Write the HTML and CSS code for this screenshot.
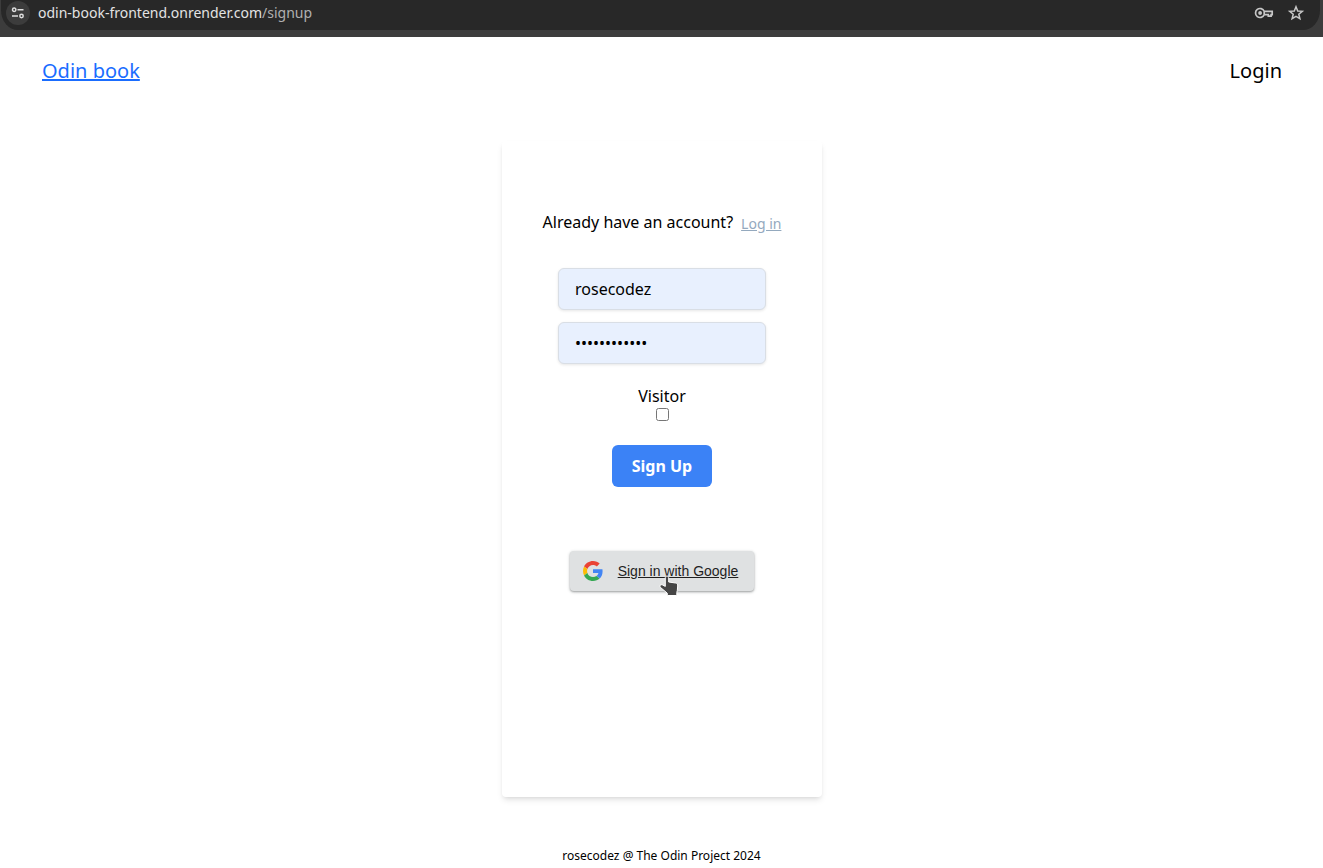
FILE: index.html
```html
<!DOCTYPE html>
<html lang="en">
<head>
<meta charset="utf-8">
<meta name="viewport" content="width=device-width, initial-scale=1">
<title>Odin book</title>
<link rel="stylesheet" href="styles.css">
</head>
<body>
<div class="toolbar">
  <div class="address">
    <button class="site-info" type="button" aria-label="Site information">
      <svg width="14" height="14" viewBox="0 0 14 14" fill="none" stroke="#dedede" stroke-width="1.5"><circle cx="3.2" cy="3.8" r="1.7"/><path d="M6.5 3.8H12.5M1 10H7"/><circle cx="10.5" cy="10" r="1.7"/></svg>
    </button>
    <span class="url">odin-book-frontend.onrender.com<span class="path">/signup</span></span>
    <button class="tool" type="button" aria-label="Passwords">
      <svg width="20" height="20" viewBox="0 0 20 20" fill="none" stroke="#c7c7c7" stroke-width="1.7"><path d="M10.2 8.3H18.2V11.7H17.1V13.2H14.3V11.7H10.2A4.5 4.5 0 1 1 10.2 8.3V11.7"/><circle cx="6.1" cy="10" r="1.9" fill="#c7c7c7" stroke="none"/></svg>
    </button>
    <button class="tool" type="button" aria-label="Bookmark this tab">
      <svg width="20" height="20" viewBox="0 0 20 20" fill="none" stroke="#c7c7c7" stroke-width="1.5"><path d="M10 3.8 11.7 8 16.3 8.3 12.8 11.2 13.9 15.7 10 13.3 6.1 15.7 7.2 11.2 3.7 8.3 8.3 8Z"/></svg>
    </button>
  </div>
</div>
<header class="header">
  <a class="brand" href="#">Odin book</a>
  <a class="login" href="#">Login</a>
</header>
<main class="main">
  <section class="card">
    <p class="account">Already have an account? <a class="account-link" href="#">Log in</a></p>
    <form class="form">
      <input class="field" type="text" aria-label="Username" value="rosecodez">
      <input class="field" type="password" aria-label="Password" value="rosecodez123">
      <label class="visitor">Visitor <input class="check" type="checkbox"></label>
      <button class="submit" type="button">Sign Up</button>
    </form>
    <div class="google-wrap">
      <a class="google" href="#">
        <svg width="20" height="20" viewBox="0 0 48 48"><path fill="#EA4335" d="M24 9.5c3.54 0 6.71 1.22 9.21 3.6l6.85-6.85C35.9 2.38 30.47 0 24 0 14.62 0 6.51 5.38 2.56 13.22l7.98 6.19C12.43 13.72 17.74 9.5 24 9.5z"/><path fill="#4285F4" d="M46.98 24.55c0-1.57-.15-3.09-.38-4.55H24v9.02h12.94c-.58 2.96-2.26 5.48-4.78 7.18l7.73 6c4.51-4.18 7.09-10.36 7.09-17.65z"/><path fill="#FBBC05" d="M10.53 28.59c-.48-1.45-.76-2.99-.76-4.59s.27-3.14.76-4.59l-7.98-6.19C.92 16.46 0 20.12 0 24c0 3.88.92 7.54 2.56 10.78l7.97-6.19z"/><path fill="#34A853" d="M24 48c6.48 0 11.93-2.13 15.89-5.81l-7.73-6c-2.15 1.45-4.92 2.3-8.16 2.3-6.26 0-11.57-4.22-13.47-9.91l-7.98 6.19C6.51 42.62 14.62 48 24 48z"/></svg>
        <span class="google-text">Sign in with Google</span>
      </a>
      <svg class="cursor" width="20" height="22" viewBox="0 0 20 22"><path fill="#454545" stroke="#fff" stroke-width="1" d="M6.3 2.6C6.3.6 9.7.6 9.7 2.6V7L16.5 8C18.2 8.3 18.8 9.3 18.7 11L18.3 15.5 17.8 17.5V20.5H8.3V18.2L1.2 12.2C.2 10.6 1.6 9.2 3.2 9.8L6.3 11.4Z"/></svg>
    </div>
  </section>
</main>
<footer class="footer">rosecodez @ The Odin Project 2024</footer>
</body>
</html>
```
FILE: styles.css
```css
* {
  box-sizing: border-box;
}

body {
  margin: 0;
  min-height: 100vh;
  display: flex;
  flex-direction: column;
  background: #fff;
  color: #000;
  font: 16px/24px "Noto Sans", sans-serif;
}

button {
  padding: 0;
  border: 0;
  font: inherit;
}

.toolbar {
  padding: 0 3px 7px 1px;
  background: #3c3c3c;
}

.address {
  display: flex;
  align-items: center;
  height: 30px;
  padding: 0 12px 4px 5px;
  border-radius: 0 0 17px 17px / 0 0 20px 20px;
  background: #282828;
  color: #e3e3e3;
  font-size: 14px;
}

.site-info {
  display: grid;
  place-items: center;
  width: 24px;
  height: 24px;
  margin-right: 8px;
  border-radius: 50%;
  background: #3c3c3c;
}

.url {
  flex: 1;
}

.path {
  color: #b0b0b0;
}

.tool {
  display: grid;
  place-items: center;
  width: 24px;
  height: 24px;
  margin-left: 8px;
  background: transparent;
}

.header {
  display: flex;
  justify-content: space-between;
  padding: 20px 41px 20px 42px;
  font-size: 20px;
  line-height: 28px;
}

.brand {
  color: #1a6dff;
}

.login {
  color: #000;
  text-decoration: none;
}

.main {
  flex: 1;
  display: flex;
  justify-content: center;
  padding: 36px 16px 51px 17px;
}

.card {
  display: flex;
  flex-direction: column;
  align-items: center;
  width: 320px;
  padding-top: 69px;
  border-radius: 4px;
  box-shadow: 0 4px 6px -1px rgba(0, 0, 0, 0.1), 0 2px 4px -2px rgba(0, 0, 0, 0.1);
}

.account {
  display: flex;
  gap: 8px;
  margin: 0 0 32px;
}

.account-link {
  padding-top: 2px;
  color: #94a9be;
  font-size: 14px;
}

.form {
  display: flex;
  flex-direction: column;
  align-items: center;
  gap: 12px;
}

.field {
  width: 208px;
  height: 42px;
  padding: 8px 16px;
  border: 1px solid #d9dee5;
  border-radius: 6px;
  background: #e8f0fe;
  box-shadow: 0 1px 3px rgba(0, 0, 0, 0.1);
  color: #000;
  font: inherit;
}

.visitor {
  display: flex;
  flex-direction: column;
  align-items: center;
  margin: 8px 0 12px;
}

.check {
  width: 13px;
  height: 13px;
  margin: 0;
}

.submit {
  padding: 9px 20px;
  border-radius: 6px;
  background: #3b82f6;
  color: #fff;
  font-weight: 700;
}

.google-wrap {
  position: relative;
  margin-top: 64px;
}

.google {
  display: flex;
  align-items: center;
  gap: 12px;
  width: 184px;
  height: 40px;
  padding: 0 13px;
  border-radius: 4px;
  background: #dfe1e2;
  box-shadow: 0 1px 2px rgba(60, 64, 67, 0.4), 0 1px 3px 1px rgba(60, 64, 67, 0.12);
  color: #1f1f1f;
  font: 14px/20px "Liberation Sans", Arial, sans-serif;
}

.google-text {
  flex: 1;
  text-align: center;
}

.cursor {
  position: absolute;
  left: 89px;
  top: 24px;
  pointer-events: none;
}

.footer {
  padding-bottom: 4px;
  text-align: center;
  font-size: 12px;
  line-height: 16px;
}
```
